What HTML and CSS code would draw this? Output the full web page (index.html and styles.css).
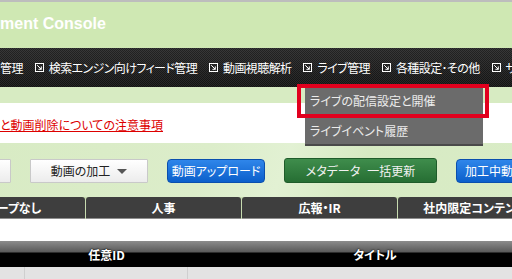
FILE: index.html
```html
<!DOCTYPE html>
<html lang="ja">
<head>
<meta charset="utf-8">
<link rel="stylesheet" href="styles.css">
</head>
<body>
<div class="page">
  <div class="topline"></div>
  <header class="header"><h1 class="title">ment Console</h1></header>
  <nav class="nav">
    <span class="nav-item">管理</span>
    <span class="nav-item"><svg class="ico" viewBox="0 0 9 9"><rect x="0.5" y="0.5" width="8" height="8"/><path d="M2.2 2.2 L6.3 6.3 M6.3 3.4 V6.3 H3.4"/></svg>検索エンジン向けフィード管理</span>
    <span class="nav-item"><svg class="ico" viewBox="0 0 9 9"><rect x="0.5" y="0.5" width="8" height="8"/><path d="M2.2 2.2 L6.3 6.3 M6.3 3.4 V6.3 H3.4"/></svg>動画視聴解析</span>
    <span class="nav-item"><svg class="ico" viewBox="0 0 9 9"><rect x="0.5" y="0.5" width="8" height="8"/><path d="M2.2 2.2 L6.3 6.3 M6.3 3.4 V6.3 H3.4"/></svg>ライブ管理</span>
    <span class="nav-item"><svg class="ico" viewBox="0 0 9 9"><rect x="0.5" y="0.5" width="8" height="8"/><path d="M2.2 2.2 L6.3 6.3 M6.3 3.4 V6.3 H3.4"/></svg>各種設定･その他</span>
    <span class="nav-item"><svg class="ico" viewBox="0 0 9 9"><rect x="0.5" y="0.5" width="8" height="8"/><path d="M2.2 2.2 L6.3 6.3 M6.3 3.4 V6.3 H3.4"/></svg>サポート</span>
  </nav>
  <div class="notice-area">
    <div class="notice"><a class="notice-link" href="#">と動画削除についての注意事項</a></div>
  </div>
  <div class="toolbar">
    <button class="btn btn-white btn-partial">&nbsp;</button>
    <button class="btn btn-white btn-process">動画の加工<span class="caret"></span></button>
    <button class="btn btn-blue btn-upload">動画アップロード</button>
    <button class="btn btn-green btn-meta"><span>メタデータ</span><span class="meta-sep">一括更新</span></button>
    <button class="btn btn-blue btn-proc">加工中動画一覧</button>
  </div>
  <div class="tabs">
    <div class="tab tab-first">グループなし</div>
    <div class="tab">人事</div>
    <div class="tab">広報・IR</div>
    <div class="tab">社内限定コンテンツ</div>
  </div>
  <div class="blank"></div>
  <div class="thead">
    <div class="th th-check"></div>
    <div class="th th-id">任意ID</div>
    <div class="th th-title">タイトル</div>
  </div>
  <div class="trow">
    <div class="td td-check"></div>
    <div class="td td-id"></div>
    <div class="td td-title"></div>
  </div>

  <div class="dropdown">
    <div class="dd-item">ライブの配信設定と開催</div>
    <div class="dd-item">ライブイベント履歴</div>
  </div>
  <div class="highlight"></div>
</div>
</body>
</html>
```

FILE: styles.css
```css
* { box-sizing: border-box; }
html, body { margin: 0; padding: 0; }
body {
  width: 512px;
  height: 279px;
  overflow: hidden;
  background: #d9ecc6;
  font-family: "Noto Sans CJK JP", "Noto Sans", sans-serif;
  font-feature-settings: "palt";
}
.page { position: relative; width: 512px; height: 279px; overflow: hidden; }

.topline { height: 2px; background: #bdbdbd; }

.header {
  height: 46px;
  background: #cfe8b3;
  padding-top: 13px;
}
.title {
  margin: 0;
  font-family: "Liberation Sans", Arial, sans-serif;
  font-weight: bold;
  font-size: 16px;
  line-height: 18px;
  color: #ffffff;
  white-space: nowrap;
}

.nav {
  height: 39px;
  display: flex;
  align-items: center;
  white-space: nowrap;
  overflow: hidden;
  background-color: #1c1c1c;
  background-image:
    linear-gradient(to bottom, rgba(255,255,255,0.06), rgba(0,0,0,0.15)),
    repeating-conic-gradient(#2c2c2c 0 25%, #161616 0 50%);
  background-size: 100% 100%, 2px 2px;
  color: #ffffff;
  font-size: 12px;
  letter-spacing: -0.6px;
}
.nav-item {
  display: flex;
  align-items: center;
  margin-right: 12px;
  flex: none;
}
.ico {
  width: 9px;
  height: 9px;
  margin-right: 5px;
  fill: none;
  stroke: #ffffff;
  stroke-width: 1;
}

.notice-area {
  padding-top: 16px;
  background: #d7ebc2;
}
.notice {
  height: 40px;
  background: #ffffff;
  display: flex;
  align-items: center;
  padding-left: 0;
  padding-top: 2px;
}
.notice-link {
  color: #dd0000;
  font-size: 12px;
  text-decoration: underline;
  white-space: nowrap;
}

.toolbar {
  height: 54px;
  padding-top: 16px;
  display: flex;
  gap: 19px;
  background: linear-gradient(110deg, #d8ebc4 0%, #dcedca 40%, #e2f1d3 55%, #d7eac3 70%, #d9ecc6 100%);
}
.btn {
  flex: none;
  height: 24px;
  padding: 0;
  font-family: "Noto Sans CJK JP", "Noto Sans", sans-serif;
  font-feature-settings: "palt";
  font-size: 12px;
  line-height: 1;
  display: flex;
  align-items: center;
  justify-content: center;
  white-space: nowrap;
  cursor: pointer;
}
.btn-white {
  background: linear-gradient(#ffffff, #ececec);
  border: 1px solid #c9c9c9;
  color: #222222;
  border-radius: 1px;
}
.btn-partial { width: 41px; margin-left: -30px; }
.btn-process { width: 118px; }
.caret {
  display: inline-block;
  margin-left: 7px;
  width: 0;
  height: 0;
  border-left: 5px solid transparent;
  border-right: 5px solid transparent;
  border-top: 5px solid #555555;
}
.btn-blue {
  background: linear-gradient(#2f86ea, #0b5fcb);
  border: 1px solid #0a4fae;
  border-radius: 4px;
  color: #ffffff;
}
.btn-upload { width: 98px; }
.btn-proc { width: 100px; justify-content: flex-start; padding-left: 8px; }
.btn-green {
  background: linear-gradient(#3f8d4c, #266e33);
  border: 1px solid #1f5c2a;
  border-radius: 3px;
  color: #f2f2f2;
  width: 153px;
  height: 25px;
  margin-top: -1px;
}
.meta-sep { margin-left: 7px; }

.tabs {
  height: 22px;
  display: flex;
  gap: 1px;
  overflow: hidden;
  background: #c7dbb0;
}
.tab {
  flex: none;
  width: 155px;
  height: 22px;
  background: #3e3e3e;
  border-radius: 3px 3px 0 0;
  border-bottom: 1px solid #8d8d8d;
  color: #ffffff;
  font-weight: bold;
  font-size: 12px;
  display: flex;
  align-items: center;
  justify-content: center;
  white-space: nowrap;
}
.tab-first { margin-left: -70px; }

.blank { height: 22px; background: #ffffff; }

.thead {
  height: 26px;
  display: flex;
  background: linear-gradient(to bottom, #8c8c8c 0px, #5a5a5a 11px, #000000 12px, #000000 100%);
}
.th {
  flex: none;
  color: #ffffff;
  font-weight: bold;
  font-size: 12px;
  display: flex;
  align-items: center;
  justify-content: center;
  padding-top: 1px;
  text-shadow: 0 0 2px #000, 0 0 1px #000;
}
.th-check { width: 25px; }
.th-id { width: 163px; }
.th-title { width: 374px; }

.trow {
  height: 12px;
  display: flex;
  background: #e3e3e3;
}
.td { flex: none; height: 12px; border-right: 1px solid #cfcfcf; }
.td-check { width: 25px; }
.td-id { width: 163px; }
.td-title { width: 374px; }

.dropdown {
  position: absolute;
  left: 305px;
  top: 86px;
  width: 178px;
  background: #6b6b6b;
  border-bottom: 2px solid #4a4a4a;
}
.dd-item {
  height: 29px;
  padding-left: 5px;
  display: flex;
  align-items: center;
  color: #ececec;
  font-size: 12px;
  white-space: nowrap;
}
.dd-item + .dd-item { border-top: 1px solid #5e5e5e; }

.highlight {
  position: absolute;
  left: 297px;
  top: 84px;
  width: 192px;
  height: 34px;
  border: 4px solid #e1001e;
}
```
